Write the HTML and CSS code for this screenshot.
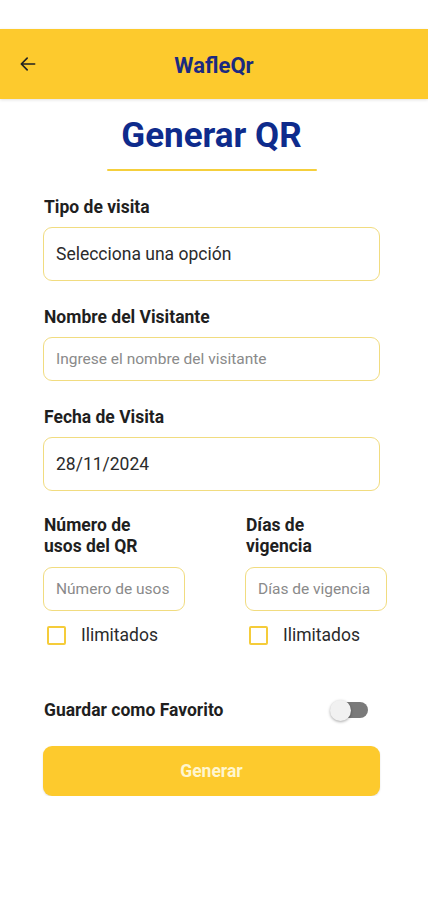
FILE: index.html
```html
<!DOCTYPE html>
<html lang="es">
	<head>
		<meta charset="UTF-8">
		<title>WafleQr - Generar QR</title>
		<link rel="stylesheet" href="styles.css">
	</head>
	<body>
		<div class="status-bar"></div>
		<header class="app-bar">
			<button class="back-button" aria-label="Volver">
				<svg width="20" height="20" viewBox="0 0 24 24">
					<path d="M20 12H5M11 5l-7 7 7 7" fill="none" stroke="#222" stroke-width="2" stroke-linecap="round" stroke-linejoin="round"/>
				</svg>
			</button>
			<h1 class="app-title">WafleQr</h1>
		</header>

		<main class="form">
			<h2 class="page-title">Generar QR</h2>
			<div class="title-rule"></div>

			<label class="field-label">Tipo de visita</label>
			<div class="field field-tall">Selecciona una opción</div>

			<label class="field-label">Nombre del Visitante</label>
			<div class="field field-short placeholder">Ingrese el nombre del visitante</div>

			<label class="field-label">Fecha de Visita</label>
			<div class="field field-tall">28/11/2024</div>

			<div class="columns">
				<div class="column">
					<label class="field-label two-lines">Número de<br>usos del QR</label>
					<div class="field field-short placeholder">Número de usos</div>
					<div class="check-row">
						<span class="checkbox"></span>
						<span>Ilimitados</span>
					</div>
				</div>
				<div class="column">
					<label class="field-label two-lines">Días de<br>vigencia</label>
					<div class="field field-short placeholder">Días de vigencia</div>
					<div class="check-row">
						<span class="checkbox"></span>
						<span>Ilimitados</span>
					</div>
				</div>
			</div>

			<div class="favorite-row">
				<span class="field-label">Guardar como Favorito</span>
				<span class="switch"><span class="switch-thumb"></span></span>
			</div>

			<button class="submit-button">Generar</button>
		</main>
	</body>
</html>
```

FILE: styles.css
```css
* {
	box-sizing:  border-box;
	font-family: Roboto, "Noto Sans", sans-serif;
}

body {
	margin:     0;
	background: #fff;
	color:      #222;
}

.status-bar {
	height: 29px;
}

.app-bar {
	height:      70px;
	background:  #fdca2d;
	display:     flex;
	align-items: center;
	position:    relative;
	box-shadow:  0 1px 3px rgba(0, 0, 0, 0.12);
}

.back-button {
	background: none;
	border:     none;
	padding:    0;
	margin:     0 0 0 18px;
	width:      20px;
	height:     20px;
	display:    flex;
}

.app-title {
	flex:        1;
	margin:      2px 38px 0 0;
	text-align:  center;
	font-size:   22px;
	font-weight: 700;
	color:       #1b2a80;
}

.form {
	padding:        0 48px 0 43px;
	display:        flex;
	flex-direction: column;
}

.page-title {
	margin:      17px 0 0;
	text-align:  center;
	font-size:   35px;
	line-height: 40px;
	font-weight: 700;
	color:       #0e2b8c;
}

.title-rule {
	width:         210px;
	height:        2px;
	margin:        13px 0 0 64px;
	background:    #f5cf3c;
	border-radius: 1px;
}

.field-label {
	display:     block;
	margin:      26px 0 10px 1px;
	font-size:   17.5px;
	line-height: 20px;
	font-weight: 700;
	color:       #1f1f1f;
}

.field {
	border:        1.5px solid #f1dc80;
	border-radius: 9px;
	padding:       0 12px;
	display:       flex;
	align-items:   center;
	font-size:     17.5px;
	color:         #2b2b2b;
}

.field-tall {
	height: 54px;
}

.field-short {
	height: 44px;
}

.placeholder {
	font-size: 15.5px;
	color:     #8a8a8a;
}

.columns {
	display:               grid;
	grid-template-columns: 142px 142px;
	column-gap:            60px;
}

.two-lines {
	line-height: 21px;
	margin-top:  24px;
}

.check-row {
	display:     flex;
	align-items: center;
	gap:         15px;
	margin:      14px 0 0 4px;
	font-size:   17.5px;
	color:       #2b2b2b;
}

.checkbox {
	width:         19px;
	height:        19px;
	border:        2px solid #f5cc3a;
	border-radius: 2px;
}

.favorite-row {
	display:         flex;
	align-items:     center;
	justify-content: space-between;
	margin-top:      55px;
}

.favorite-row .field-label {
	margin: 0 0 0 1px;
}

.switch {
	width:         36px;
	height:        16px;
	border-radius: 8px;
	background:    #7a7a7a;
	margin-right:  12px;
	display:       flex;
	align-items:   center;
}

.switch-thumb {
	width:         21px;
	height:        21px;
	border-radius: 50%;
	background:    #f1f1f1;
	margin-left:   -2px;
	box-shadow:    0 1px 3px rgba(0, 0, 0, 0.35);
}

.submit-button {
	margin-top:    26px;
	height:        50px;
	border:        none;
	border-radius: 9px;
	background:    #fdca2d;
	color:         #fff6cf;
	font-size:     17.5px;
	font-weight:   700;
	box-shadow:    0 1px 2px rgba(0, 0, 0, 0.12);
}
```
